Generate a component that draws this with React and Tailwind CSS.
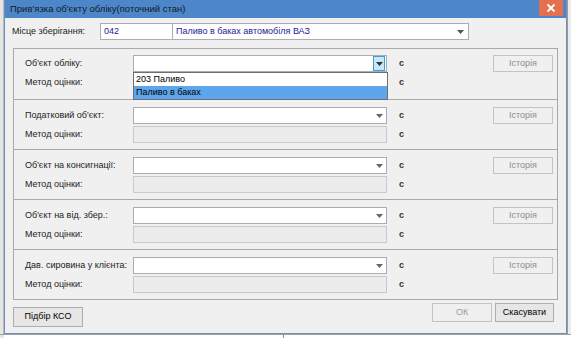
import React from "react";

const font = { fontFamily: '"Liberation Sans", Arial, sans-serif' };

function Arrow({ color = "#555" }) {
  return (
    <svg width="7" height="4" viewBox="0 0 7 4">
      <path d="M0 0 L7 0 L3.5 4 Z" fill={color} />
    </svg>
  );
}

function Combo({ hover = false, children }) {
  return (
    <div className="relative w-[254px] h-[17px] bg-white border border-[#abadb3] flex items-center justify-end">
      {hover ? (
        <div className="w-[12px] h-[15px] mr-[1px] bg-[#c5e7f7] border border-[#3c9fd8] flex items-center justify-center">
          <Arrow color="#333" />
        </div>
      ) : (
        <div className="w-[12px] h-[15px] mr-[1px] flex items-center justify-center">
          <Arrow color="#666" />
        </div>
      )}
      {children}
    </div>
  );
}

function Method() {
  return <div className="w-[254px] h-[17px] bg-[#ececec] border border-[#c9c9c9]" />;
}

function HistoryBtn() {
  return (
    <div className="w-[60px] h-[17px] border border-[#c4c4c4] bg-[#f0f0f0] flex items-center justify-center text-[#8d8d8d]">
      Історія
    </div>
  );
}

function Section({ label, first = false, open = false }) {
  return (
    <div className={`flex pl-[11px] pr-[4px] ${first ? "pt-[6px] pb-[8px]" : "pt-[7px] pb-[6px] border-t border-[#a9a9a9]"}`}>
      <div className="flex flex-col gap-[2px]">
        <div className="flex items-center h-[17px]">
          <div className="w-[108px]">{label}</div>
          <Combo hover={open}>
            {open && (
              <div className="absolute left-[-1px] top-[16px] w-[255px] h-[28px] bg-white border border-[#6e6e6e] z-10 flex flex-col">
                <div className="h-[13px] flex items-center pl-[2px] text-black">203 Паливо</div>
                <div className="h-[13px] flex items-center pl-[2px] bg-[#5da6ec] text-black">Паливо в баках</div>
              </div>
            )}
          </Combo>
          <div className="ml-[12px] font-bold text-[#333]">с</div>
        </div>
        <div className="flex items-center h-[17px]">
          <div className="w-[108px]">Метод оцінки:</div>
          <Method />
          <div className="ml-[12px] font-bold text-[#333]">с</div>
        </div>
      </div>
      <div className="flex-1" />
      <HistoryBtn />
    </div>
  );
}

export default function App() {
  return (
    <div className="w-[571px] h-[338px] bg-[#e3e3e3] overflow-hidden text-[9px] text-[#222]" style={font}>
      <div className="flex h-[334px]">
        <div className="w-[4px] h-full bg-[#e6e6e6] border-r border-[#b9b9b9]" />
        <div className="w-[563px] h-full flex flex-col border-x border-b border-[#6d8fb8] bg-[#f0f0f0]">
          <div className="h-[18px] bg-[#4d87c9] flex items-center justify-between pl-[5px]">
            <div className="text-[9.5px] text-[#0f1a2a]">Прив'язка об'єкту обліку(поточний стан)</div>
            <div className="w-[24px] h-[16px] mb-[2px] mr-[3px] bg-[#e5704f] flex items-center justify-center">
              <svg width="10" height="10" viewBox="0 0 10 10">
                <path d="M1.5 1.5 L8.5 8.5 M8.5 1.5 L1.5 8.5" stroke="white" strokeWidth="1.8" />
              </svg>
            </div>
          </div>
          <div className="flex-1 flex flex-col px-[7px] pt-[5px]">
            <div className="flex items-center h-[17px]">
              <div className="w-[88px]">Місце зберігання:</div>
              <div className="w-[73px] h-[17px] bg-white border border-[#abadb3] flex items-center pl-[3px] text-[#1c2296]">042</div>
              <div className="w-[296px] h-[17px] bg-white border border-[#abadb3] border-l-0 flex items-center pl-[3px] text-[#1c2296]">
                <div className="flex-1">Паливо в баках автомобіля ВАЗ</div>
                <div className="w-[12px] mr-[2px] flex items-center justify-center">
                  <Arrow color="#555" />
                </div>
              </div>
            </div>
            <div className="mt-[8px] mx-[1px] border border-[#a9a9a9]">
              <Section label="Об'єкт обліку:" first open />
              <Section label="Податковий об'єкт:" />
              <Section label="Об'єкт на консигнації:" />
              <Section label="Об'єкт на від. збер.:" />
              <Section label="Дав. сировина у клієнта:" />
            </div>
            <div className="flex items-start pl-[1px] pr-[5px]">
              <div className="mt-[7px] w-[70px] h-[20px] border border-[#adadad] bg-[#e6e6e6] flex items-center justify-center text-black">
                Підбір КСО
              </div>
              <div className="flex-1" />
              <div className="mt-[3px] w-[60px] h-[19px] border border-[#c4c4c4] bg-[#efefef] flex items-center justify-center text-[#9a9a9a]">
                ОК
              </div>
              <div className="mt-[3px] ml-[3px] w-[59px] h-[19px] border border-[#adadad] bg-[#e6e6e6] flex items-center justify-center text-black">
                Скасувати
              </div>
            </div>
          </div>
        </div>
        <div className="flex-1 h-full bg-[#ececec] border-l border-[#9a9a9a]" />
      </div>
      <div className="h-[4px] flex border-t border-[#a0a0a0]">
        <div className="w-[4px] bg-[#e6e6e6]" />
        <div className="w-[280px] bg-white border-r border-[#8a8a8a]" />
        <div className="flex-1 bg-white" />
      </div>
    </div>
  );
}
